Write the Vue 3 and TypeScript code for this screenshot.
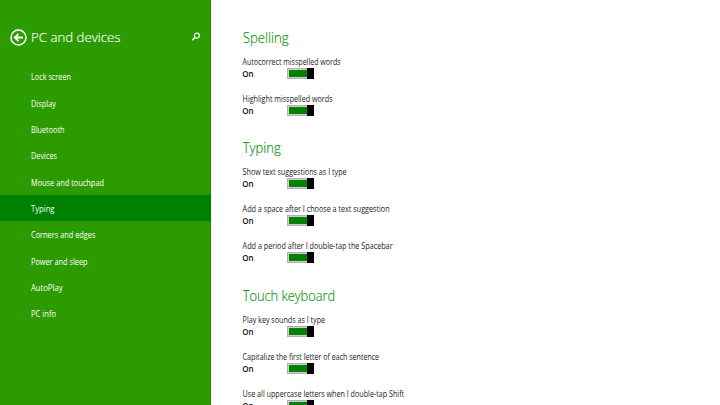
<script setup lang="ts">
interface NavItem { label: string; width: number }
interface Setting { label: string; width: number }
interface Section { title: string; width: number; settings: Setting[] }

const active = 'Typing'
const nav: NavItem[] = [
  { label: 'Lock screen', width: 40 },
  { label: 'Display', width: 25 },
  { label: 'Bluetooth', width: 33.5 },
  { label: 'Devices', width: 26 },
  { label: 'Mouse and touchpad', width: 73 },
  { label: 'Typing', width: 23.5 },
  { label: 'Corners and edges', width: 64.5 },
  { label: 'Power and sleep', width: 56.5 },
  { label: 'AutoPlay', width: 31.5 },
  { label: 'PC info', width: 25 },
]
const sections: Section[] = [
  {
    title: 'Spelling', width: 46, settings: [
      { label: 'Autocorrect misspelled words', width: 98 },
      { label: 'Highlight misspelled words', width: 90 },
    ],
  },
  {
    title: 'Typing', width: 38, settings: [
      { label: 'Show text suggestions as I type', width: 104 },
      { label: 'Add a space after I choose a text suggestion', width: 147 },
      { label: 'Add a period after I double-tap the Spacebar', width: 150 },
    ],
  },
  {
    title: 'Touch keyboard', width: 92.5, settings: [
      { label: 'Play key sounds as I type', width: 82.5 },
      { label: 'Capitalize the first letter of each sentence', width: 136.5 },
      { label: 'Use all uppercase letters when I double-tap Shift', width: 161.5 },
    ],
  },
]
</script>

<template>
  <div class="screen">
    <aside class="sidebar">
      <header class="top">
        <svg class="back" viewBox="0 0 17 17">
          <circle cx="8.5" cy="8.5" r="7.5" />
          <path d="M13 8.5H5M8.5 4.8L4.8 8.5L8.5 12.2" />
        </svg>
        <svg class="title" height="24"><text x="0" y="17" textLength="89.5" lengthAdjust="spacingAndGlyphs">PC and devices</text></svg>
        <svg class="search" viewBox="0 0 10 10">
          <circle cx="5.9" cy="3.6" r="2.5" />
          <path d="M4 5.5L1.2 8.3" />
        </svg>
      </header>
      <nav>
        <div v-for="item in nav" :key="item.label" class="nav-item" :class="{ active: item.label === active }">
          <svg class="line"><text x="0" y="11.5" :textLength="item.width" lengthAdjust="spacingAndGlyphs">{{ item.label }}</text></svg>
        </div>
      </nav>
    </aside>
    <main>
      <section v-for="s in sections" :key="s.title">
        <svg class="heading"><text x="0.7" y="19" :textLength="s.width" lengthAdjust="spacingAndGlyphs">{{ s.title }}</text></svg>
        <div v-for="o in s.settings" :key="o.label" class="setting">
          <svg class="line"><text x="0.6" y="11.5" :textLength="o.width" lengthAdjust="spacingAndGlyphs">{{ o.label }}</text></svg>
          <div class="control">
            <span class="state">On</span>
            <span class="toggle"><span class="fill"></span><span class="thumb"></span></span>
          </div>
        </div>
      </section>
    </main>
  </div>
</template>

<style>
body { background: #fff; overflow: hidden; }
</style>

<style scoped>
.screen {
  display: flex;
  width: 720px;
  height: 405px;
  overflow: hidden;
  font-family: "Open Sans", "Noto Sans", sans-serif;
  font-size: 8.2px;
  color: #222;
}
svg { display: block; flex: none; overflow: visible; }
text { fill: currentColor; }
.sidebar {
  width: 211px;
  box-sizing: border-box;
  flex: none;
  background: #2c9b00;
  color: #fff;
  border-right: 1px solid #188c06;
}
.top {
  display: flex;
  align-items: center;
  height: 63px;
  box-sizing: border-box;
  padding: 11px 0 0 10px;
}
.back { width: 17px; height: 17px; fill: none; stroke: #fff; stroke-width: 1.5; }
.back path { stroke-width: 1.9; }
.title { width: 160px; margin-left: 3.5px; font-size: 13.4px; font-weight: 300; stroke: #fff; stroke-width: 0.15; }
.search { width: 10px; height: 10px; fill: none; stroke: #fff; stroke-width: 1.2; }
.search path { stroke-width: 1.6; }
.nav-item {
  display: flex;
  align-items: center;
  height: 26.36px;
  padding-left: 31px;
  margin-right: -1px;
}
.nav-item.active { background: #008000; }
.line { width: 170px; height: 16px; }
main { padding: 23.5px 0 0 31.2px; }
.heading {
  width: 120px;
  height: 29.2px;
  font-size: 14.2px;
  font-weight: 300;
  color: #0c900c;
  stroke: #0c900c;
  stroke-width: 0.15;
}
section { padding-bottom: 7.7px; }
.setting { height: 36.9px; }
.setting .line { height: 14px; }
.control { display: flex; align-items: center; height: 13px; }
.state { width: 44.8px; font-size: 8px; font-weight: 600; color: #111; line-height: 12px; padding-top: 1px; box-sizing: border-box; }
.toggle {
  display: flex;
  width: 27px;
  height: 11px;
  box-sizing: border-box;
  border: 1px solid #b5abb5;
  background: #d3cbd3;
  padding: 1px;
}
.fill { flex: 1; background: #008400; }
.thumb { width: 7px; height: 11px; margin: -2px -2px 0 0; background: #000; }
</style>
